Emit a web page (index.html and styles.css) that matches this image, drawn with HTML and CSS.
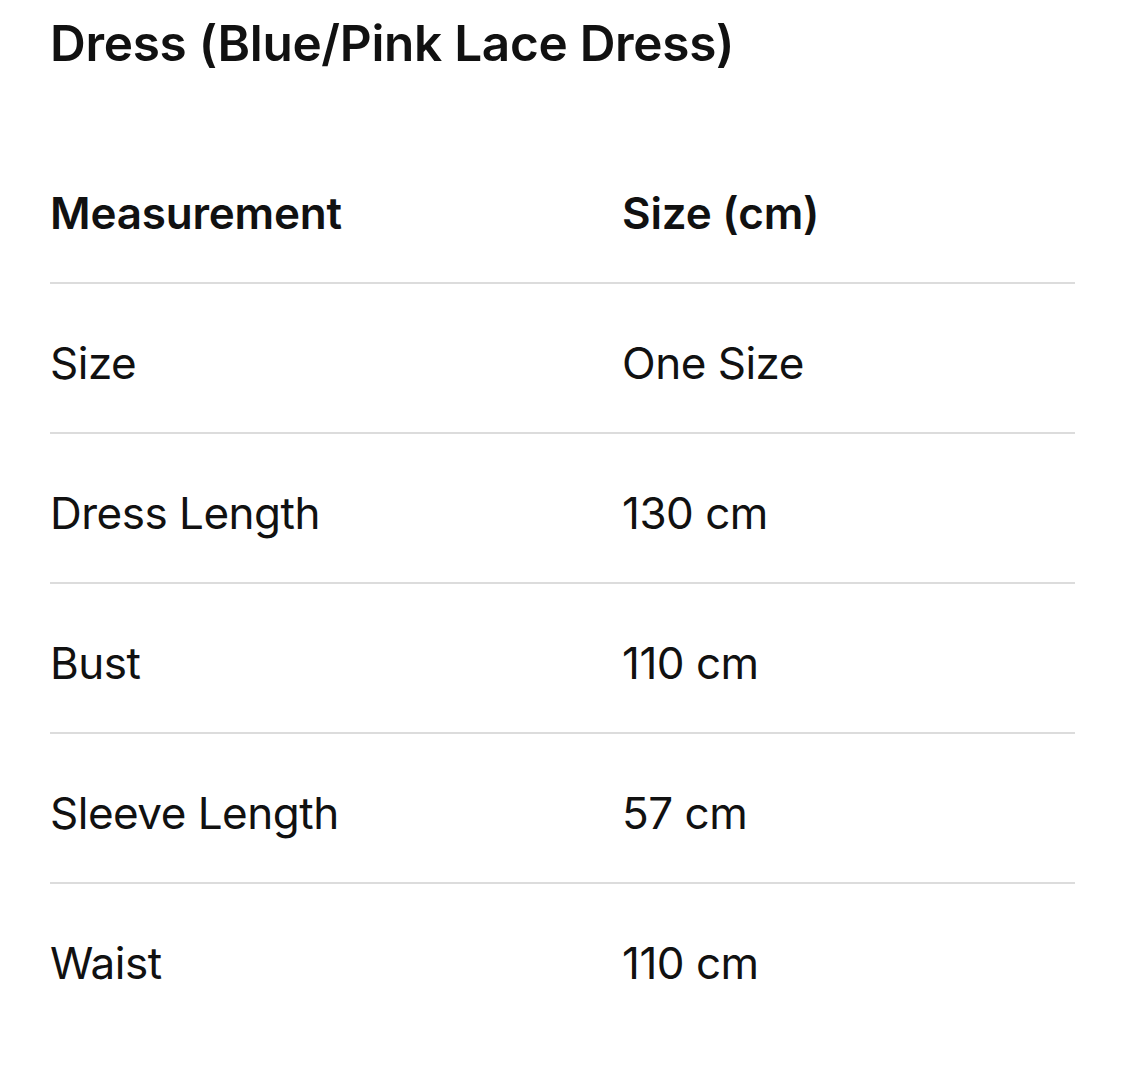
FILE: index.html
```html
<!DOCTYPE html>
<html lang="en">
<head>
<meta charset="utf-8">
<title>Dress (Blue/Pink Lace Dress)</title>
<link rel="stylesheet" href="styles.css">
</head>
<body>
<main class="page">
  <h1 class="title">Dress (Blue/Pink Lace Dress)</h1>
  <table class="sizes">
    <thead>
      <tr><th>Measurement</th><th>Size (cm)</th></tr>
    </thead>
    <tbody>
      <tr><td>Size</td><td>One Size</td></tr>
      <tr><td>Dress Length</td><td>130 cm</td></tr>
      <tr><td>Bust</td><td>110 cm</td></tr>
      <tr><td>Sleeve Length</td><td>57 cm</td></tr>
      <tr><td>Waist</td><td>110 cm</td></tr>
    </tbody>
  </table>
</main>
</body>
</html>
```

FILE: styles.css
```css
html, body {
  margin: 0;
  padding: 0;
  background: #ffffff;
}
body {
  font-family: Inter, "Noto Sans", "Liberation Sans", sans-serif;
  color: #111111;
}
.page {
  padding: 0 50px;
}
.title {
  margin: 0;
  height: 134px;
  box-sizing: border-box;
  font-size: 49.5px;
  line-height: 86px;
  font-weight: 600;
  letter-spacing: -0.3px;
}
.sizes {
  width: 100%;
  border-collapse: collapse;
  table-layout: fixed;
}
.sizes th,
.sizes td {
  text-align: left;
  padding: 9px 0 0 0;
  height: 139px;
  vertical-align: middle;
  font-size: 44px;
  letter-spacing: -0.5px;
}
.sizes th {
  font-weight: 600;
  letter-spacing: -0.2px;
}
.sizes td {
  font-weight: 400;
}
.sizes th:first-child,
.sizes td:first-child {
  width: 572px;
}
.sizes thead tr,
.sizes tbody tr:not(:last-child) {
  border-bottom: 2px solid #dcdcdc;
}
```
